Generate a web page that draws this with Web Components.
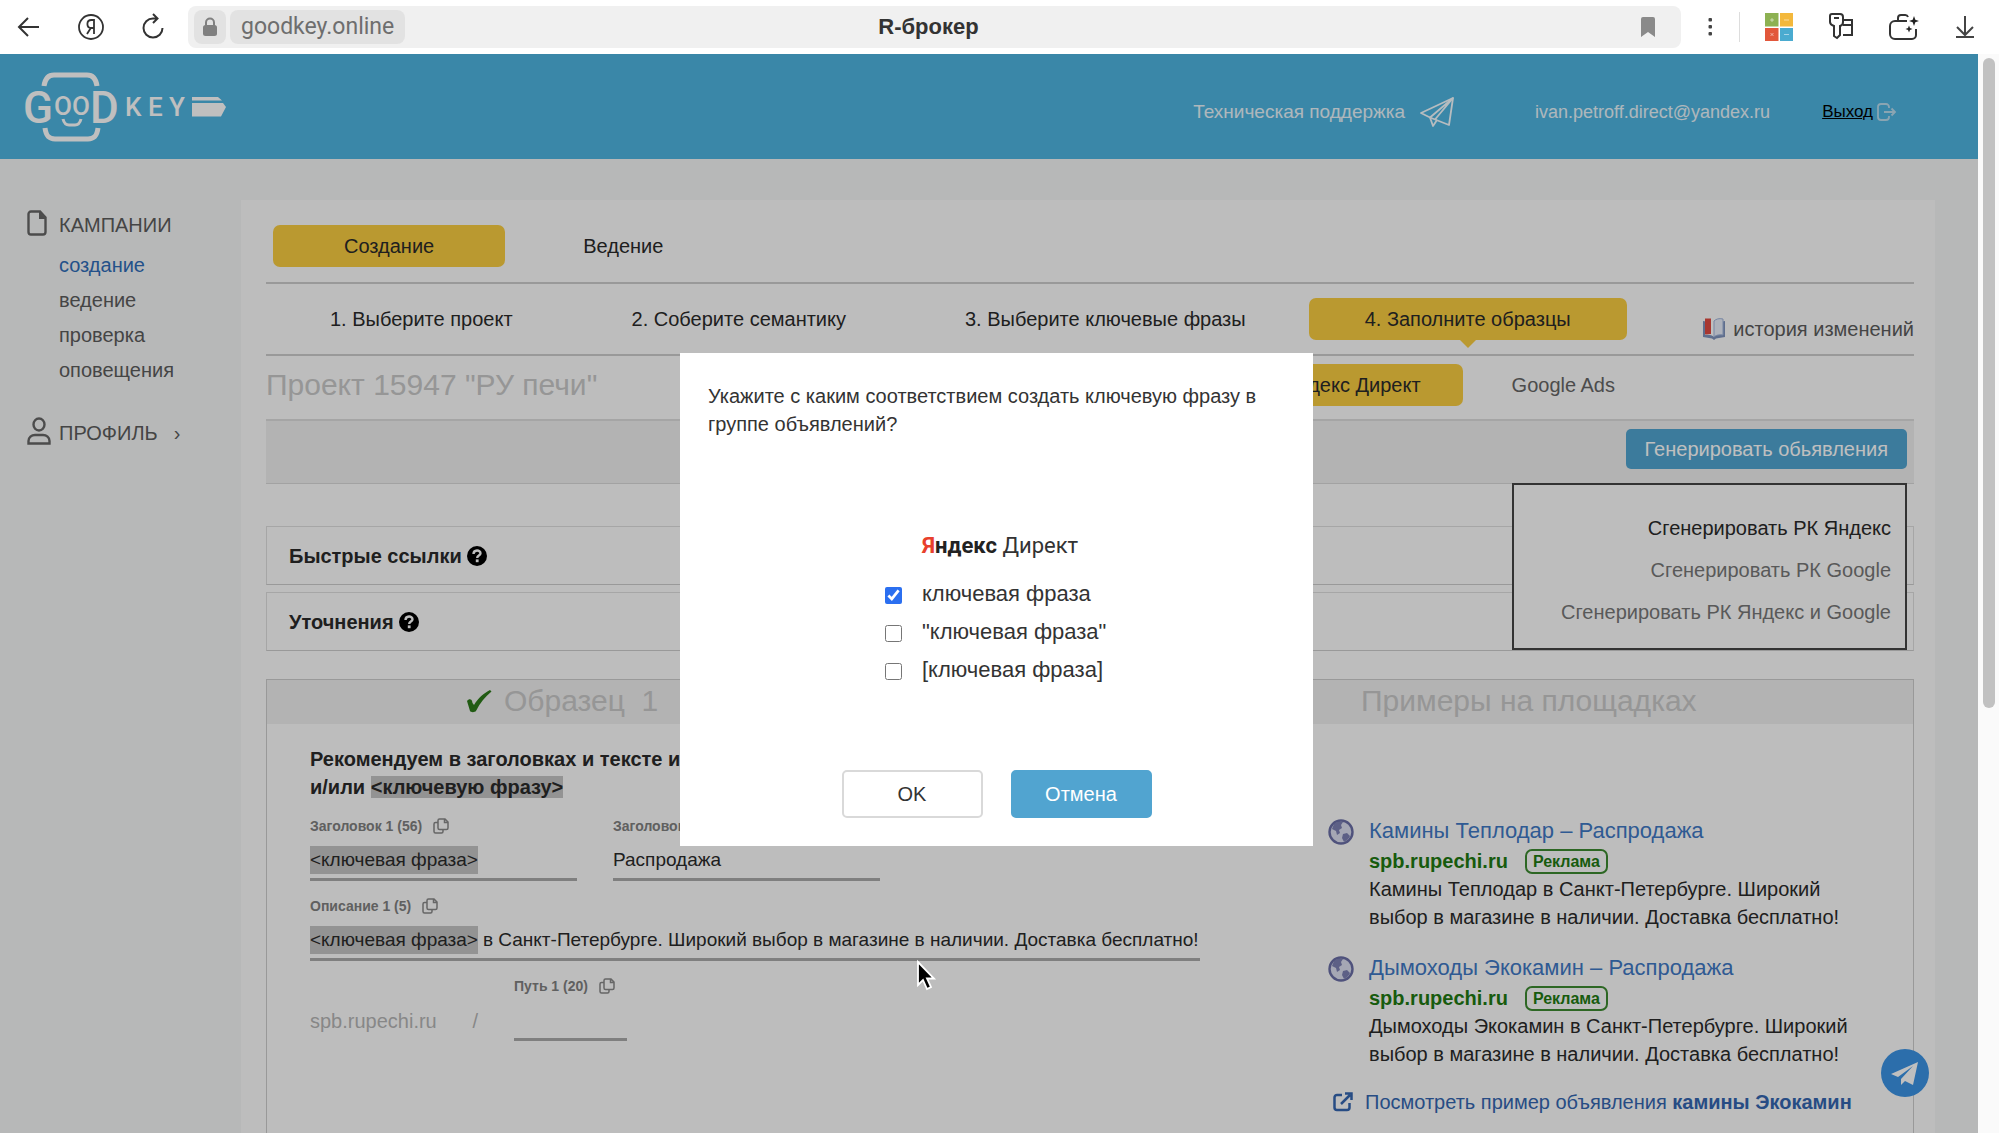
<!DOCTYPE html>
<html lang="ru">
<head>
<meta charset="utf-8">
<title>R-брокер</title>
<style>
  html, body { margin: 0; height: 100%; }
  body {
    font: 20px/28px "Liberation Sans", Arial, sans-serif;
    color: #2a2a2a;
    background: #fff;
    overflow: hidden;
  }
</style>
</head>
<body>
<gk-app></gk-app>

<script>
const icons = {
  back: ['0 0 26 26', '<path d="M4 13h19M12 4l-9 9 9 9" fill="none" stroke="#333" stroke-width="2"/>'],
  yandex: ['0 0 26 26', '<circle cx="13" cy="13" r="12" fill="none" stroke="#333" stroke-width="1.8"/><path d="M16 20V6h-2.600c-2.600 0-4 1.700-4 4s1.300 4 3.800 4H16M12.800 14 9 20" fill="none" stroke="#333" stroke-width="1.800"/>'],
  reload: ['0 0 26 26', '<path d="M22.500 14A9.500 9.500 0 1 1 13 4.500h3.500M13 0l4.500 4.500L13 9" fill="none" stroke="#333" stroke-width="2"/>'],
  lock: ['0 0 16 20', '<rect x="1" y="8" width="14" height="11" rx="2.500" fill="#808080"/><path d="M4 9V5.500a4 4 0 0 1 8 0V9" fill="none" stroke="#808080" stroke-width="2"/>'],
  bookmark: ['0 0 16 20', '<path d="M1 2a2 2 0 0 1 2-2h10a2 2 0 0 1 2 2v18l-7-5-7 5z" fill="#8a8a8a"/>'],
  dots: ['0 0 6 20', '<g fill="#444"><rect x="1.500" y="1" width="3.500" height="3.500" rx="1"/><rect x="1.500" y="8" width="3.500" height="3.500" rx="1"/><rect x="1.500" y="15" width="3.500" height="3.500" rx="1"/></g>'],
  squares: ['0 0 30 30', '<rect x="1" y="1" width="13.500" height="13.500" fill="#8db152"/><rect x="16" y="1" width="13" height="13.500" fill="#f3b83c"/><rect x="1" y="16" width="13.500" height="13" fill="#e2573b"/><rect x="16" y="16" width="13" height="13" fill="#4aabd0"/><g stroke="#fff" stroke-opacity=".5"><path d="M6 8h4M8 6v4M20 8h5M6.500 21l3 3M9.500 21l-3 3M20 22.500h5"/></g>'],
  key: ['0 0 30 30', '<g fill="none" stroke="#333" stroke-width="2"><path d="M6 2h8a3 3 0 0 1 3 3v5a4 4 0 0 1-3 4v9l-3 3-3-2V14c-2-.700-4-2-4-4V4a2 2 0 0 1 2-2zM8 6h5"/><path d="M17 8h9v15h-9M17 13h9"/></g>'],
  bag: ['0 0 30 30', '<g fill="none" stroke="#333" stroke-width="2"><path d="M19 9H7a5 5 0 0 0-5 5v8a5 5 0 0 0 5 5h17a4 4 0 0 0 4-4v-6"/><path d="M10 9V6a3 3 0 0 1 3-3h4a3 3 0 0 1 3 2"/></g><path d="M26 4l1.300 3.700L31 9l-3.700 1.300L26 14l-1.300-3.700L21 9l3.700-1.300zM21 13.500l1 2.500 2.500 1-2.500 1-1 2.500-1-2.500-2.500-1 2.500-1z" fill="#222"/>'],
  download: ['0 0 30 30', '<path d="M15 4v18M7 15l8 8 8-8M6 25h18" fill="none" stroke="#444" stroke-width="2"/>'],
  plane: ['0 0 36 32', '<g fill="none" stroke="#f4fbff" stroke-width="1.800" stroke-linejoin="round"><path d="M34 2 2 17l9 4.500L30 29z"/><path d="M34 2 11 21.500 14 30l4-6M34 2 16 23.500"/></g>'],
  exit: ['0 0 20 18', '<path d="M12 5V4a3 3 0 0 0-3-3H4a3 3 0 0 0-3 3v10a3 3 0 0 0 3 3h5a3 3 0 0 0 3-3v-1M7 9h11M14.500 5.500 18 9l-3.500 3.500" fill="none" stroke="#b9dcee" stroke-width="1.800"/>'],
  file: ['0 0 20 26', '<path d="M4 1.500h9l5.500 6V22a2.500 2.500 0 0 1-2.500 2.500H4A2.500 2.500 0 0 1 1.500 22V4A2.500 2.500 0 0 1 4 1.500z" fill="none" stroke="#666" stroke-width="2.400"/><path d="M12 1v8h7z" fill="#666"/>'],
  user: ['0 0 24 28', '<g fill="none" stroke="#666" stroke-width="2.400"><ellipse cx="12" cy="7.500" rx="5.500" ry="6"/><path d="M1.500 26.500V24c0-3.500 3-6 6.500-6h8c3.500 0 6.500 2.500 6.500 6v2.500z"/></g>'],
  book: ['0 0 24 24', '<path d="M1 4 12 6l11-2v16l-9 1.500-2 1.500-2-1.500L1 20z" fill="#7f93bd"/><path d="M3 2c4-1 7 0 9 2v16c-2-2-5-2.500-9-2z" fill="#fff"/><path d="M21 2c-4-1-7 0-9 2v16c2-2 5-2.500 9-2z" fill="#e8eefa" stroke="#9fb3d9"/><path d="M3 1.500 9 1.500v15.500l-6 .5z" fill="#e04a40"/>'],
  help: ['0 0 20 20', '<circle cx="10" cy="10" r="10" fill="#000"/><path d="M6.500 8c0-4.500 7-4.500 7-.700 0 2.400-3.300 2.200-3.300 4.700" fill="none" stroke="#fff" stroke-width="2.400"/><rect x="8.800" y="13.400" width="2.800" height="2.800" fill="#fff"/>'],
  check: ['0 0 26 24', '<path d="M1 12c2-2.500 5-2.500 5.500 2L8 16C12 9 18 4 24 1l1.500 1.500C19 8 14 14 10 22c-1 1.500-5.500 1.500-6 0z" fill="#2c7a1a"/>'],
  copy: ['0 0 16 16', '<g fill="none" stroke="#888" stroke-width="1.500"><path d="M6.500 1H12l3 3v6a1.500 1.500 0 0 1-1.500 1.500h-7A1.500 1.500 0 0 1 5 10V2.500A1.500 1.500 0 0 1 6.500 1zM11.500 1v3.500H15"/><path d="M5 4.500H2.500A1.500 1.500 0 0 0 1 6v7.500A1.500 1.500 0 0 0 2.500 15h6a1.500 1.500 0 0 0 1.500-1.500v-2"/></g>'],
  globe: ['0 0 26 26', '<circle cx="13" cy="13" r="11.500" fill="#dcdff0" stroke="#6a6ea6" stroke-width="2.400"/><path d="M6 5c3-2.500 7-3 9-2l-2 3 1 3-3 2 1 3-3 2-1-4-4-2zM15 15l4-1 3 3c-1 3-4 5-6 6l-2-4z" fill="#7d81b3"/>'],
  external: ['0 0 20 20', '<g fill="none" stroke="#3466b0" stroke-width="2.500"><path d="M9 3H4a2.500 2.500 0 0 0-2.500 2.500v10A2.500 2.500 0 0 0 4 18h10a2.500 2.500 0 0 0 2.500-2.500V11"/><path d="M8 12 17 3M12 1.500h6.500V8"/></g>'],
  telegram: ['0 0 48 48', '<circle cx="24" cy="24" r="24" fill="#3b93e5"/><path d="M37 13 10 25l7 3 15-11-12 13v6l4-4 8 4z" fill="#fff"/>'],
  cursor: ['0 0 20 32', '<path d="M2 2v23l5-5 4 9 4-2-4-8.500h7z" fill="#000" stroke="#fff" stroke-width="1.800"/>']
};

const base = `<style>
  :host { display: block; box-sizing: border-box; }
  *, *::before, *::after { box-sizing: border-box; }
  button, input { font: inherit; color: inherit; margin: 0; }
  button { border: 0; padding: 0; background: none; white-space: nowrap; }
  a { color: inherit; text-decoration: none; }
</style>`;

function define(name, render) {
  customElements.define(name, class extends HTMLElement {
    constructor() {
      super();
      this.attachShadow({ mode: 'open' });
    }
    connectedCallback() {
      const t = document.createElement('template');
      t.innerHTML = base + render(this);
      this.shadowRoot.replaceChildren(t.content.cloneNode(true));
    }
  });
}
const attr = (el, name) => el.getAttribute(name) || '';

define('gk-icon', el => {
  const [box, body] = icons[attr(el, 'name')];
  const [, , w, h] = box.split(' ');
  return `<style>:host { display: block; flex: none; width: ${w}px; height: ${h}px; } svg { display: block; overflow: visible; }</style>
  <svg width="${w}" height="${h}" viewBox="${box}" aria-hidden="true">${body}</svg>`;
});

define('gk-browser-bar', () => `<style>
  :host { display: flex; align-items: center; height: 54px; padding: 0 19px 0 16px; background: #fff; }
  .nav { display: flex; gap: 36px; margin-right: 22px; }
  .address { flex: 1; display: grid; grid-template-columns: 1fr auto 1fr; align-items: center; height: 42px; padding: 0 18px 0 6px; border-radius: 8px; background: #f0f0f0; }
  .chips { display: flex; gap: 4px; }
  .chips button { height: 34px; border-radius: 8px; background: #e2e2e2; color: #6e6e6e; font-size: 23px; display: flex; align-items: center; justify-content: center; }
  .lock { width: 32px; }
  .site { padding: 0 11px; font-family: Roboto, "Liberation Sans", sans-serif; }
  .title { font-weight: 700; font-size: 22px; color: #333; }
  .mark { justify-self: end; padding-right: 7px; }
  .menu { margin: 0 26px; }
  .tools { display: flex; gap: 32px; padding-left: 24px; border-left: 1px solid #ddd; align-items: center; height: 30px; }
</style>
<div class="nav">
  <button aria-label="Назад"><gk-icon name="back"></gk-icon></button>
  <button aria-label="Яндекс"><gk-icon name="yandex"></gk-icon></button>
  <button aria-label="Обновить"><gk-icon name="reload"></gk-icon></button>
</div>
<div class="address">
  <div class="chips"><button class="lock" aria-label="Защита"><gk-icon name="lock"></gk-icon></button><button class="site">goodkey.online</button></div>
  <div class="title">R-брокер</div>
  <button class="mark" aria-label="Закладка"><gk-icon name="bookmark"></gk-icon></button>
</div>
<button class="menu" aria-label="Меню"><gk-icon name="dots"></gk-icon></button>
<div class="tools">
  <button aria-label="Сервисы"><gk-icon name="squares"></gk-icon></button>
  <button aria-label="Пароли"><gk-icon name="key"></gk-icon></button>
  <button aria-label="Коллекции"><gk-icon name="bag"></gk-icon></button>
  <button aria-label="Загрузки"><gk-icon name="download"></gk-icon></button>
</div>`);

define('gk-logo', () => `<style>
  svg { display: block; overflow: visible; }
  text { font-family: Roboto, "Liberation Sans", sans-serif; font-weight: 500; fill: #fff; }
</style>
<svg width="200" height="72" viewBox="0 0 200 72" role="img" aria-label="GooD KEY">
  <g fill="none" stroke="#fff" stroke-width="5">
    <path d="M17 14c1-7 4-11 10-11h33c6 0 9 4 10 11M18 56c1 8 4 11 10 11h33c6 0 9-3 10-11"/>
    <path d="M36 47c1 4 3 6 6 6h6c3 0 5-2 6-6" stroke-width="3"/>
  </g>
  <text x="-4" y="51" font-size="44">G</text><text x="27" y="43" font-size="26">O</text><text x="45" y="43" font-size="26">O</text><text x="63" y="51" font-size="44">D</text>
  <text x="98" y="44" font-size="26">K</text><text x="121" y="44" font-size="26">E</text><text x="142" y="44" font-size="26">Y</text>
  <path d="M165 25h26l4 3.500h-30zM165 31h31l3 4-5 9.500h-29z" fill="#fff"/>
</svg>`);

define('gk-header', () => `<style>
  :host { display: flex; align-items: center; height: 105px; padding: 3px 81px 0 27px; background: #4eb4e0; color: #e8f5fb; font-size: 18px; }
  a { display: flex; align-items: center; padding-top: 7px; }
  .support { gap: 14px; margin-left: auto; font-size: 19px; }
  .mail { margin: 0 52px 0 80px; }
  .exit { gap: 4px; color: #000; font-size: 17px; text-decoration: underline; }
</style>
<gk-logo></gk-logo>
<a class="support" href="#support">Техническая поддержка <gk-icon name="plane"></gk-icon></a>
<a class="mail" href="#account">ivan.petroff.direct@yandex.ru</a>
<a class="exit" href="#exit">Выход <gk-icon name="exit"></gk-icon></a>`);

define('gk-side-nav', () => `<style>
  :host { color: #5c5c5c; padding: 50px 0 0 27px; }
  h2 { display: flex; align-items: center; gap: 8px; margin: 0; font: inherit; line-height: 32px; }
  h2 gk-icon { width: 24px; margin-bottom: 4px; }
  ul { list-style: none; margin: 0 0 29px; padding: 7px 0 0 32px; line-height: 35px; }
  .on { color: #2f6db8; }
  i { font-style: normal; padding-left: 8px; }
</style>
<nav>
  <h2><gk-icon name="file"></gk-icon>КАМПАНИИ</h2>
  <ul>
    <li><a class="on" href="#create">создание</a></li>
    <li><a href="#manage">ведение</a></li>
    <li><a href="#check">проверка</a></li>
    <li><a href="#alerts">оповещения</a></li>
  </ul>
  <h2><gk-icon name="user"></gk-icon>ПРОФИЛЬ <i>›</i></h2>
</nav>`);

define('gk-tab', () => `<style>
  :host { display: block; }
  button { position: relative; display: block; height: 42px; padding: 0 var(--tab-pad, 56px); border-radius: 7px; }
  :host([active]) button { background: #f9cc40; }
  :host([pointer]) button::after { content: ""; position: absolute; top: 100%; left: 50%; margin-left: -8px; border: 8px solid transparent; border-top-color: #f9cc40; border-bottom: 0; }
</style><button><slot></slot></button>`);

define('gk-accordion', () => `<style>
  :host { border: 1px solid #dedede; border-bottom-color: #ccc; padding: 0 22px; }
  button { display: flex; align-items: center; gap: 5px; height: 57px; font-weight: 700; }
</style><button><slot></slot><gk-icon name="help"></gk-icon></button>`);

define('gk-field', el => `<style>
  :host { display: block; font-size: 19px; }
  .head { display: flex; align-items: center; gap: 11px; height: 20px; margin-bottom: 9px; color: #808080; font-size: 14px; line-height: 20px; font-weight: 700; }
  .line { display: flex; align-items: center; gap: 5px; height: 36px; padding-bottom: 3px; border-bottom: 3px solid #aaa; }
  input { border: 0; padding: 0; background: none; outline: 0; height: 28px; min-width: 0; }
  .rest { flex: 1; }
  .chip { field-sizing: content; background: #c4c4c4; }
</style>
<div class="head"><label for="f">${attr(el, 'label')}</label><gk-icon name="copy"></gk-icon></div>
<div class="line">${el.hasAttribute('chip') ? `<input class="chip" aria-label="Переменная" value="${attr(el, 'chip')}">` : ''}<input class="rest" id="f" value="${attr(el, 'value')}"></div>`);

define('gk-ad', el => `<style>
  :host { display: flex; gap: 15px; }
  gk-icon { margin-top: 5px; }
  .title { display: block; font-size: 22px; line-height: 33px; color: #3f78c4; }
  .url { display: flex; align-items: center; gap: 17px; height: 28px; color: #1f7a12; font-weight: 700; }
  .badge { height: 25px; padding: 0 6px; border: 2px solid #3c8a30; border-radius: 7px; font-size: 16px; line-height: 22px; }
  p { margin: 0; }
</style>
<gk-icon name="globe"></gk-icon>
<div>
  <a class="title" href="#ad">${attr(el, 'heading')}</a>
  <div class="url"><a href="#site">spb.rupechi.ru</a><span class="badge">Реклама</span></div>
  <p><slot></slot></p>
</div>`);

define('gk-workspace', () => `<style>
  :host { display: flex; flex-direction: column; background: #fdfdfd; padding: 25px 21px 0 25px; }
  .tabs { display: flex; gap: 7px; }
  .modes { --tab-pad: 71px; padding: 0 0 15px 7px; border-bottom: 2px solid #ccc; }
  .steps { padding: 14px 0 11px 8px; border-bottom: 2px solid #ccc; }
  .history { display: flex; align-items: center; gap: 7px; margin-left: auto; padding-top: 17px; color: #5c5c5c; white-space: nowrap; }
  .project { display: flex; justify-content: space-between; align-items: flex-start; height: 63px; padding: 8px 257px 0 0; }
  h1, h2 { margin: 0; font-weight: 400; font-size: 30px; line-height: 42px; color: #c8c8c8; white-space: nowrap; }
  .platforms { --tab-pad: 42px; }
  .ads { color: #666; }
  .bar { position: relative; display: flex; justify-content: flex-end; align-items: flex-start; height: 65px; padding: 8px 7px 0; background: #efefef; border-top: 2px solid #ddd; border-bottom: 1px solid #d8d8d8; margin-bottom: 42px; }
  .generate { height: 40px; padding: 0 19px; border-radius: 5px; background: #51a4d0; color: #fff; }
  .menu { position: absolute; z-index: 1; top: 100%; right: 7px; width: 395px; height: 167px; padding: 22px 14px 0 0; border: 2px solid #444; background: #fdfdfd; text-align: right; color: #777; display: flex; flex-direction: column; }
  .menu button { text-align: right; line-height: 42px; height: 42px; }
  .menu .on { color: #2a2a2a; }
  .lists { display: grid; gap: 7px; margin-bottom: 28px; }
  .samples { flex: 1; display: flex; border: 1px solid #ccc; border-bottom: 0; }
  .sample { flex: 1; min-width: 0; }
  .places { flex: 0 0 600px; }
  .samples h2 { display: flex; align-items: center; gap: 12px; height: 44px; padding-bottom: 2px; background: #efefef; }
  .sample h2 { padding-left: 199px; }
  .places h2 { padding-left: 48px; }
  .form { padding: 21px 0 0 43px; }
  .tip { margin: 0 0 15px; font-weight: 700; }
  mark { background: #c4c4c4; color: inherit; }
  .row { display: flex; gap: 36px; margin-bottom: 15px; }
  .row gk-field { width: 267px; }
  .row .wide { width: 890px; }
  .row .path { width: 113px; }
  .domain { display: flex; justify-content: space-between; width: 168px; padding-top: 30px; line-height: 30px; color: #b5b5b5; }
  .feed { display: grid; gap: 20px; padding: 90px 20px 0 15px; }
  .more { display: flex; align-items: center; gap: 12px; padding-left: 5px; color: #3466b0; white-space: nowrap; }
</style>
<div class="tabs modes"><gk-tab active>Создание</gk-tab><gk-tab>Ведение</gk-tab></div>
<div class="tabs steps">
  <gk-tab>1. Выберите проект</gk-tab><gk-tab>2. Соберите семантику</gk-tab><gk-tab>3. Выберите ключевые фразы</gk-tab><gk-tab active pointer>4. Заполните образцы</gk-tab>
  <a class="history" href="#history"><gk-icon name="book"></gk-icon>история изменений</a>
</div>
<div class="project">
  <h1>Проект 15947 "РУ печи"</h1>
  <div class="tabs platforms"><gk-tab active>Яндекс Директ</gk-tab><gk-tab class="ads">Google Ads</gk-tab></div>
</div>
<div class="bar">
  <button class="generate">Генерировать обьявления</button>
  <div class="menu"><button class="on">Сгенерировать РК Яндекс</button><button>Сгенерировать РК Google</button><button>Сгенерировать РК Яндекс и Google</button></div>
</div>
<div class="lists"><gk-accordion>Быстрые ссылки</gk-accordion><gk-accordion>Уточнения</gk-accordion></div>
<div class="samples">
  <section class="sample">
    <h2><gk-icon name="check"></gk-icon>Образец&nbsp; 1</h2>
    <div class="form">
      <p class="tip">Рекомендуем в заголовках и тексте использовать<br>и/или <mark>&lt;ключевую фразу&gt;</mark></p>
      <div class="row"><gk-field label="Заголовок 1 (56)" chip="<ключевая фраза>"></gk-field><gk-field label="Заголовок 2 (30)" value="Распродажа"></gk-field></div>
      <div class="row"><gk-field class="wide" label="Описание 1 (5)" chip="<ключевая фраза>" value="в Санкт-Петербурге. Широкий выбор в магазине в наличии. Доставка бесплатно!"></gk-field></div>
      <div class="row"><div class="domain"><span>spb.rupechi.ru</span><span>/</span></div><gk-field class="path" label="Путь 1 (20)"></gk-field></div>
    </div>
  </section>
  <section class="places">
    <h2>Примеры на площадках</h2>
    <div class="feed">
      <gk-ad heading="Камины Теплодар – Распродажа">Камины Теплодар в Санкт-Петербурге. Широкий<br>выбор в магазине в наличии. Доставка бесплатно!</gk-ad>
      <gk-ad heading="Дымоходы Экокамин – Распродажа">Дымоходы Экокамин в Санкт-Петербурге. Широкий<br>выбор в магазине в наличии. Доставка бесплатно!</gk-ad>
      <a class="more" href="#example"><gk-icon name="external"></gk-icon><span>Посмотреть пример объявления <b>камины Экокамин</b></span></a>
    </div>
  </section>
</div>`);

define('gk-option', el => `<style>
  label { display: flex; align-items: center; gap: 20px; height: 38px; font-size: 22px; color: #333; white-space: nowrap; }
  input { width: 17px; height: 17px; accent-color: #2b6ff0; margin-top: 3px; }
</style><label><input type="checkbox" ${el.hasAttribute('checked') ? 'checked' : ''}><slot></slot></label>`);

define('gk-dialog', () => `<style>
  :host { display: flex; flex-direction: column; width: 633px; height: 493px; padding: 29px 28px 28px; background: #fff; color: #333; }
  p { margin: 0; }
  .brand { margin: 90px 0 0 214px; font: 22px/36px Roboto, "Liberation Sans", sans-serif; white-space: nowrap; }
  .brand b { display: inline-block; color: #222; }
  .brand b::first-letter { color: #e8402c; }
  .options { margin: 11px 0 0 177px; }
  .actions { display: flex; justify-content: center; gap: 28px; margin-top: auto; }
  .actions button { width: 141px; height: 48px; border-radius: 5px; border: 2px solid #d9d9d9; }
  .actions .primary { background: #51a4d0; border-color: #51a4d0; color: #fff; }
</style>
<p>Укажите с каким соответствием создать ключевую фразу в группе объявлений?</p>
<div class="brand"><b>Яндекс</b> Директ</div>
<div class="options"><gk-option checked>ключевая фраза</gk-option><gk-option>"ключевая фраза"</gk-option><gk-option>[ключевая фраза]</gk-option></div>
<div class="actions"><button>OK</button><button class="primary">Отмена</button></div>`);

define('gk-app', () => `<style>
  :host { display: flex; flex-direction: column; height: 100vh; }
  .view { flex: 1; min-height: 0; display: flex; }
  .site { position: relative; flex: 1; min-width: 0; display: flex; flex-direction: column; background: #f5f6f6; overflow: hidden; }
  .body { flex: 1; min-height: 0; display: flex; }
  gk-side-nav { flex: 0 0 241px; }
  gk-workspace { flex: 1; min-width: 0; margin: 41px 43px 0 0; }
  .scroll { flex: 0 0 21px; padding: 4px 4px 0 5px; background: #fafafa; }
  .scroll i { display: block; height: 650px; border-radius: 6px; background: #c1c1c1; }
  .shade { position: absolute; z-index: 2; inset: 0; display: flex; justify-content: center; align-items: flex-start; padding: 299px 0 0 15px; background: rgba(0, 0, 0, .25); }
  .chat { position: absolute; z-index: 1; right: 49px; bottom: 36px; }
  .pointer { position: absolute; z-index: 3; left: 916px; top: 960px; }
</style>
<gk-browser-bar></gk-browser-bar>
<div class="view">
  <div class="site">
    <gk-header></gk-header>
    <div class="body"><gk-side-nav></gk-side-nav><gk-workspace></gk-workspace></div>
    <button class="chat" aria-label="Telegram"><gk-icon name="telegram"></gk-icon></button>
    <div class="shade"><gk-dialog role="dialog" aria-modal="true"></gk-dialog></div>
  </div>
  <div class="scroll"><i></i></div>
</div>
<gk-icon class="pointer" name="cursor"></gk-icon>`);
</script>
</body>
</html>
